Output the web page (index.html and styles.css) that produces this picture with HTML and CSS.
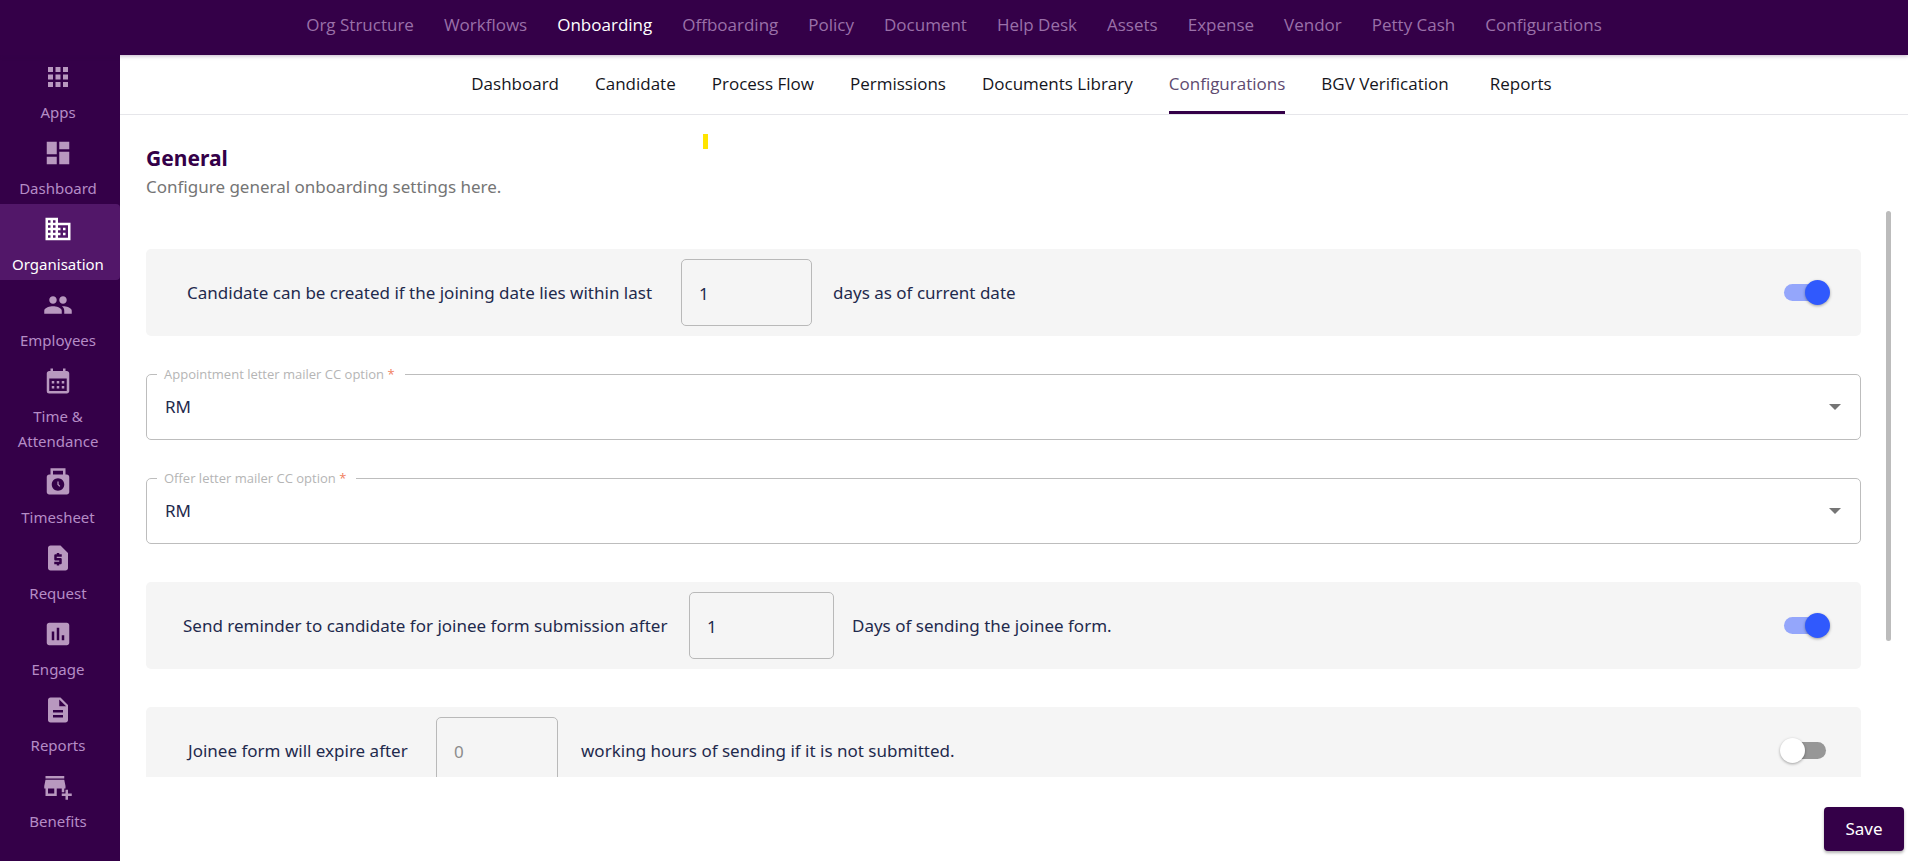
FILE: index.html
```html
<!DOCTYPE html>
<html lang="en">
<head>
<meta charset="utf-8">
<meta name="viewport" content="width=device-width, initial-scale=1">
<title>Onboarding – Configurations</title>
<link rel="stylesheet" href="styles.css">
</head>
<body>
<div class="app">
  <header class="topbar">
    <nav class="topnav" aria-label="Organisation">
      <a href="#">Org Structure</a>
      <a href="#">Workflows</a>
      <a href="#" class="is-active" aria-current="page">Onboarding</a>
      <a href="#">Offboarding</a>
      <a href="#">Policy</a>
      <a href="#">Document</a>
      <a href="#">Help Desk</a>
      <a href="#">Assets</a>
      <a href="#">Expense</a>
      <a href="#">Vendor</a>
      <a href="#">Petty Cash</a>
      <a href="#">Configurations</a>
    </nav>
  </header>

  <nav class="sidebar" aria-label="Main">
    <a href="#" class="side-item">
      <svg class="side-icon" viewBox="0 0 24 24"><path d="M4 8h4V4H4v4zm6 12h4v-4h-4v4zm-6 0h4v-4H4v4zm0-6h4v-4H4v4zm6 0h4v-4h-4v4zm6-10v4h4V4h-4zm-6 4h4V4h-4v4zm6 6h4v-4h-4v4zm0 6h4v-4h-4v4z"/></svg>
      <span>Apps</span>
    </a>
    <a href="#" class="side-item">
      <svg class="side-icon" viewBox="0 0 24 24"><path d="M3 13h8V3H3v10zm0 8h8v-6H3v6zm10 0h8V11h-8v10zm0-18v6h8V3h-8z"/></svg>
      <span>Dashboard</span>
    </a>
    <a href="#" class="side-item is-active" aria-current="page">
      <svg class="side-icon" viewBox="0 0 24 24"><path d="M12 7V3H2v18h20V7H12zM6 19H4v-2h2v2zm0-4H4v-2h2v2zm0-4H4V9h2v2zm0-4H4V5h2v2zm4 12H8v-2h2v2zm0-4H8v-2h2v2zm0-4H8V9h2v2zm0-4H8V5h2v2zm10 12h-8v-2h2v-2h-2v-2h2v-2h-2V9h8v10zm-2-8h-2v2h2v-2zm0 4h-2v2h2v-2z"/></svg>
      <span>Organisation</span>
    </a>
    <a href="#" class="side-item">
      <svg class="side-icon" viewBox="0 0 24 24"><path d="M16 11c1.66 0 2.99-1.34 2.99-3S17.66 5 16 5s-3 1.34-3 3 1.34 3 3 3zm-8 0c1.66 0 2.99-1.34 2.99-3S9.66 5 8 5 5 6.34 5 8s1.34 3 3 3zm0 2c-2.33 0-7 1.17-7 3.5V19h14v-2.5c0-2.33-4.67-3.5-7-3.5zm8 0c-.29 0-.62.02-.97.05 1.16.84 1.97 1.97 1.97 3.45V19h6v-2.5c0-2.33-4.67-3.5-7-3.5z"/></svg>
      <span>Employees</span>
    </a>
    <a href="#" class="side-item">
      <svg class="side-icon" viewBox="0 0 24 24"><path d="M19 4h-1V2h-2v2H8V2H6v2H5c-1.11 0-1.99.9-1.99 2L3 20a2 2 0 0 0 2 2h14c1.1 0 2-.9 2-2V6c0-1.1-.9-2-2-2zm0 16H5V10h14v10zM9 14H7v-2h2v2zm4 0h-2v-2h2v2zm4 0h-2v-2h2v2zm-8 4H7v-2h2v2zm4 0h-2v-2h2v2zm4 0h-2v-2h2v2z"/></svg>
      <span>Time &amp; Attendance</span>
    </a>
    <a href="#" class="side-item">
      <svg class="side-icon" viewBox="0 0 24 24"><path d="M19 6h-1V1H6v5H5c-1.1 0-2 .9-2 2v12c0 1.1.9 2 2 2h14c1.1 0 2-.9 2-2V8c0-1.1-.9-2-2-2zM8 3h8v3H8V3zm4 16c-2.76 0-5-2.24-5-5s2.24-5 5-5 5 2.24 5 5-2.24 5-5 5z"/><path d="M12.5 11.5h-1v2.71l1.64 1.64.71-.71-1.35-1.35z"/></svg>
      <span>Timesheet</span>
    </a>
    <a href="#" class="side-item">
      <svg class="side-icon" viewBox="0 0 24 24"><path d="M20 8l-6-6H6c-1.1 0-1.99.9-1.99 2L4 20c0 1.1.89 2 1.99 2H18c1.1 0 2-.9 2-2V8zm-5 3h-4v1h3c.55 0 1 .45 1 1v3c0 .55-.45 1-1 1h-1v1h-2v-1H9v-2h4v-1h-3c-.55 0-1-.45-1-1v-3c0-.55.45-1 1-1h1V8h2v1h2v2z"/></svg>
      <span>Request</span>
    </a>
    <a href="#" class="side-item">
      <svg class="side-icon" viewBox="0 0 24 24"><path d="M19 3H5c-1.1 0-2 .9-2 2v14c0 1.1.9 2 2 2h14c1.1 0 2-.9 2-2V5c0-1.1-.9-2-2-2zM9 17H7v-7h2v7zm4 0h-2V7h2v10zm4 0h-2v-4h2v4z"/></svg>
      <span>Engage</span>
    </a>
    <a href="#" class="side-item">
      <svg class="side-icon" viewBox="0 0 24 24"><path d="M14 2H6c-1.1 0-1.99.9-1.99 2L4 20c0 1.1.89 2 1.99 2H18c1.1 0 2-.9 2-2V8l-6-6zm2 16H8v-2h8v2zm0-4H8v-2h8v2zm-3-5V3.5L18.5 9H13z"/></svg>
      <span>Reports</span>
    </a>
    <a href="#" class="side-item">
      <svg class="side-icon" viewBox="0 0 24 24"><path d="M15 17h2v-3h1v-2l-1-5H2l-1 5v2h1v6h9v-6h4v3zm-6 1H4v-4h5v4zM2 4h15v2H2zM20 18v-3h-2v3h-3v2h3v3h2v-3h3v-2z"/></svg>
      <span>Benefits</span>
    </a>
  </nav>

  <main class="page">
    <nav class="tabs" aria-label="Onboarding">
      <a href="#">Dashboard</a>
      <a href="#">Candidate</a>
      <a href="#">Process Flow</a>
      <a href="#">Permissions</a>
      <a href="#">Documents Library</a>
      <a href="#" class="is-active" aria-current="page">Configurations</a>
      <a href="#">BGV Verification</a>
      <a href="#">Reports</a>
    </nav>

    <div class="intro">
      <h1>General</h1>
      <p>Configure general onboarding settings here.</p>
      <span class="marker"></span>
    </div>

    <form class="settings" id="settings">
      <div class="settings-list">
        <div class="rule rule-joining">
          <label for="joining-days">Candidate can be created if the joining date lies within last</label>
          <input class="number" id="joining-days" type="text" inputmode="numeric" value="1">
          <span>days as of current date</span>
          <input class="switch" type="checkbox" checked aria-label="Limit joining date">
        </div>

        <fieldset class="field">
          <legend><label for="appointment-cc">Appointment letter mailer CC option <span class="required">*</span></label></legend>
          <select id="appointment-cc"><option>RM</option></select>
          <svg class="caret" viewBox="0 0 12 6"><path d="M0 0h12L6 6z"/></svg>
        </fieldset>

        <fieldset class="field">
          <legend><label for="offer-cc">Offer letter mailer CC option <span class="required">*</span></label></legend>
          <select id="offer-cc"><option>RM</option></select>
          <svg class="caret" viewBox="0 0 12 6"><path d="M0 0h12L6 6z"/></svg>
        </fieldset>

        <div class="rule rule-reminder">
          <label for="reminder-days">Send reminder to candidate for joinee form submission after</label>
          <input class="number" id="reminder-days" type="text" inputmode="numeric" value="1">
          <span>Days of sending the joinee form.</span>
          <input class="switch" type="checkbox" checked aria-label="Send reminder">
        </div>

        <div class="rule rule-expiry">
          <label for="expiry-hours">Joinee form will expire after</label>
          <input class="number" id="expiry-hours" type="text" inputmode="numeric" value="0" disabled>
          <span>working hours of sending if it is not submitted.</span>
          <input class="switch" type="checkbox" aria-label="Expire joinee form">
        </div>
      </div>
      <div class="scrollbar"><div class="scroll-thumb"></div></div>
    </form>

    <footer class="actions">
      <button class="save" type="submit" form="settings">Save</button>
    </footer>
  </main>
</div>
</body>
</html>
```
FILE: styles.css
```css
* {
  box-sizing: border-box;
}

body {
  margin: 0;
  background: #340048;
  color: #1f2a4d;
  font: 17px/24px "Noto Sans", "Open Sans", sans-serif;
}

a {
  color: inherit;
  text-decoration: none;
}

.app {
  display: grid;
  grid-template: 55px minmax(0, 1fr) / 120px minmax(0, 1fr);
  height: 100vh;
  overflow: hidden;
}

.topbar {
  grid-area: 1 / 1 / 2 / 3;
  z-index: 1;
  background: #340048;
  box-shadow: 0 1px 4px rgba(52, 0, 72, 0.3);
}

.topnav {
  display: flex;
  justify-content: center;
  gap: 30px;
  padding-top: 13px;
  color: #9a70a8;
  font-family: "Open Sans", "Noto Sans", sans-serif;
}

.topnav .is-active {
  color: #fff;
}

.sidebar {
  grid-area: 1 / 1 / 3 / 2;
  z-index: 2;
  padding-top: 52px;
  color: #b58cc6;
  font-size: 15px;
  line-height: 25px;
}

.side-item {
  display: flex;
  flex-direction: column;
  align-items: center;
  gap: 8px;
  padding: 10px 10px 3px 6px;
  text-align: center;
}

.side-item.is-active {
  background: #521769;
  border-radius: 0 4px 4px 0;
  color: #fff;
}

.side-icon {
  width: 30px;
  height: 30px;
  fill: #b898bf;
}

.is-active .side-icon {
  fill: #fff;
}

.page {
  grid-area: 2 / 2 / 3 / 3;
  display: flex;
  flex-direction: column;
  min-height: 0;
  background: #fff;
}

.tabs {
  display: flex;
  justify-content: center;
  gap: 36px;
  height: 60px;
  border-bottom: 1px solid #e6e6ea;
  color: #15151c;
  font-family: "Open Sans", "Noto Sans", sans-serif;
}

.tabs a {
  min-width: 72px;
  padding-top: 17px;
  text-align: center;
}

.tabs .is-active {
  color: #5e4a70;
  border-bottom: 3px solid #340048;
  border-radius: 3px 3px 0 0;
}

.intro {
  position: relative;
  padding: 28px 26px 12px;
}

.intro h1 {
  margin: 0;
  color: #340048;
  font-size: 21px;
  line-height: 30px;
}

.intro p {
  margin: 2px 0 0;
  color: #757575;
}

.marker {
  position: absolute;
  top: 19px;
  left: 583px;
  width: 5px;
  height: 15px;
  background: #ffe500;
}

.settings {
  display: flex;
  gap: 25px;
  flex: 0 1 566px;
  min-height: 0;
  padding: 0 17px 0 26px;
}

.settings-list {
  display: flex;
  flex: 1;
  flex-direction: column;
  gap: 38px;
  padding-top: 38px;
  overflow: hidden;
}

.rule {
  display: flex;
  flex: none;
  align-items: center;
  padding: 10px 35px 10px 41px;
  border-radius: 5px;
  background: #f5f5f5;
}

.rule-joining {
  gap: 21px;
}

.rule-joining label {
  min-width: 473px;
}

.rule-reminder {
  gap: 18px;
  padding-left: 37px;
}

.rule-reminder label {
  min-width: 488px;
}

.rule-expiry {
  gap: 23px;
  padding-left: 42px;
}

.rule-expiry label {
  min-width: 225px;
}

.number {
  width: 131px;
  height: 67px;
  padding: 2px 17px 0;
  border: 1px solid #b9b9b9;
  border-radius: 5px;
  background: transparent;
  color: inherit;
  font: inherit;
}

.rule-reminder .number {
  width: 145px;
}

.rule-expiry .number {
  width: 122px;
}

.number:disabled {
  color: #8c8c8c;
}

.switch {
  position: relative;
  width: 42px;
  height: 17px;
  margin: 0 0 0 auto;
  border-radius: 9px;
  background: #979797;
  appearance: none;
}

.switch::before {
  content: "";
  position: absolute;
  top: -4px;
  left: -4px;
  width: 25px;
  height: 25px;
  border-radius: 50%;
  background: #fff;
  box-shadow: 0 1px 3px rgba(0, 0, 0, 0.35);
}

.switch:checked {
  background: #94a6fb;
}

.switch:checked::before {
  left: 21px;
  background: #3059fd;
}

.field {
  position: relative;
  flex: none;
  height: 66px;
  margin: 0;
  padding: 0 0 0 10px;
  border: 1px solid #bdbdbd;
  border-radius: 5px;
}

.field legend {
  padding: 0 10px 0 7px;
  color: #b5b5b5;
  font-family: "Open Sans", "Noto Sans", sans-serif;
  font-size: 13px;
  line-height: 1px;
}

.required {
  color: #f08060;
}

.field select {
  width: 100%;
  height: 64px;
  padding: 0 8px;
  border: 0;
  background: transparent;
  color: inherit;
  font: inherit;
  appearance: none;
}

.caret {
  position: absolute;
  top: 29px;
  right: 19px;
  width: 12px;
  height: 6px;
  fill: #757575;
  pointer-events: none;
}

.scrollbar {
  width: 5px;
}

.scroll-thumb {
  height: 76%;
  border-radius: 3px;
  background: #bcbcbc;
}

.actions {
  display: flex;
  justify-content: flex-end;
  padding: 30px 4px 10px;
}

.save {
  width: 80px;
  height: 44px;
  border: 0;
  border-radius: 4px;
  background: #340048;
  box-shadow: 0 2px 3px rgba(0, 0, 0, 0.3);
  color: #fff;
  font: inherit;
}
```
